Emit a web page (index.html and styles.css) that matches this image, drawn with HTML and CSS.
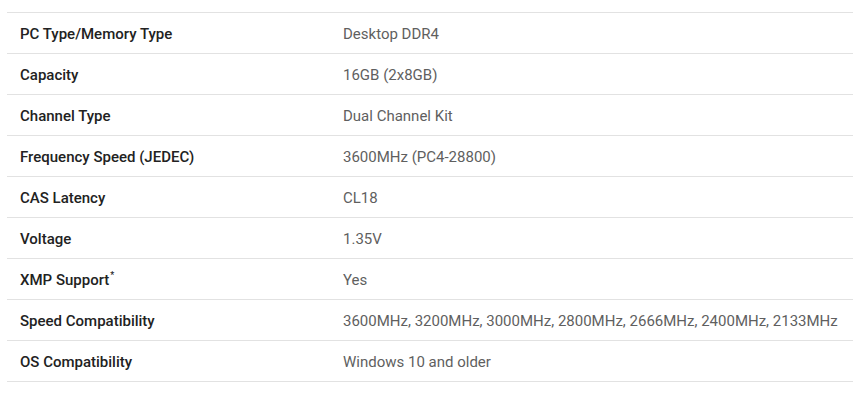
FILE: index.html
```html
<!DOCTYPE html>
<html lang="en">
<head>
    <meta charset="UTF-8">
    <meta name="viewport" content="width=device-width, initial-scale=1.0">
    <title>Specifications</title>
    <link rel="stylesheet" href="styles.css">
</head>
<body>

<!-- Spec table -->
<table class="spec-table">
    <tr><th>PC Type/Memory Type</th><td>Desktop DDR4</td></tr>
    <tr><th>Capacity</th><td>16GB (2x8GB)</td></tr>
    <tr><th>Channel Type</th><td>Dual Channel Kit</td></tr>
    <tr><th>Frequency Speed (JEDEC)</th><td>3600MHz (PC4-28800)</td></tr>
    <tr><th>CAS Latency</th><td>CL18</td></tr>
    <tr><th>Voltage</th><td>1.35V</td></tr>
    <tr><th>XMP Support<sup>*</sup></th><td>Yes</td></tr>
    <tr><th>Speed Compatibility</th><td>3600MHz, 3200MHz, 3000MHz, 2800MHz, 2666MHz, 2400MHz, 2133MHz</td></tr>
    <tr><th>OS Compatibility</th><td>Windows 10 and older</td></tr>
</table>

</body>
</html>
```

FILE: styles.css
```css
/* General Body Styling */
body {
    font-family: Roboto, "Liberation Sans", Arial, sans-serif;
    margin: 0;
    padding: 12px 1px 0 7px;
    background: #fff;
}

/* Spec table */
.spec-table {
    width: 846px;
    border-collapse: collapse;
    font-size: 15px;
}

.spec-table tr {
    height: 41px;
    border-top: 1px solid #e2e2e2;
    border-bottom: 1px solid #e2e2e2;
}

.spec-table th,
.spec-table td {
    padding: 1px 0 0;
    text-align: left;
    vertical-align: middle;
}

.spec-table th {
    width: 336px;
    padding-left: 13px;
    box-sizing: border-box;
    font-weight: 500;
    color: #222;
}

.spec-table td {
    color: #5f5f5f;
    font-weight: 400;
}

.spec-table sup {
    font-size: 9px;
    line-height: 0;
    vertical-align: 7px;
    margin-left: 1px;
}
```
